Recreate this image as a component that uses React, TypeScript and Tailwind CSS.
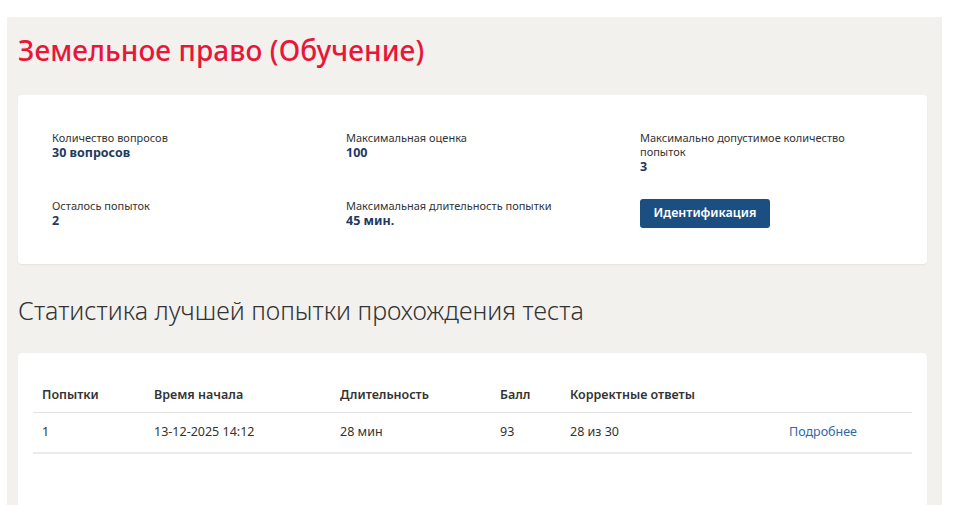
import React from "react";

const Info = ({ label, value }: { label: string; value: string }) => (
  <div className="flex flex-col">
    <div className="text-[11px] leading-[14px] text-[#333]">{label}</div>
    <div className="text-[12.5px] leading-[15px] font-bold text-[#1d3a5f]">{value}</div>
  </div>
);

export default function App() {
  return (
    <div
      className="h-[505px] w-[961px] overflow-hidden bg-white"
      style={{ fontFamily: '"Noto Sans", "Open Sans", sans-serif' }}
    >
      <div className="ml-[7px] mt-[17px] h-[488px] w-[935px] bg-[#f2f1ee] pl-[11px] pr-[15px]">
        <h1 className="pt-[16px] text-[28px] leading-[34px] font-medium text-[#e8173a] tracking-[0.1px]">
          Земельное право (Обучение)
        </h1>
        <div className="mt-[28px] h-[169px] rounded-[4px] bg-white shadow-[0_1px_2px_rgba(0,0,0,0.06)] pl-[34px] pt-[36px]">
          <div className="grid grid-cols-[294px_294px_230px] gap-y-[25px]">
            <Info label="Количество вопросов" value="30 вопросов" />
            <Info label="Максимальная оценка" value="100" />
            <Info label="Максимально допустимое количество попыток" value="3" />
            <Info label="Осталось попыток" value="2" />
            <Info label="Максимальная длительность попытки" value="45 мин." />
            <div>
              <button className="h-[29px] w-[130px] rounded-[3px] bg-[#1b4f82] text-[12.5px] font-semibold text-white">
                Идентификация
              </button>
            </div>
          </div>
        </div>
        <h2 className="mt-[30px] text-[25px] leading-[32px] font-light text-[#333]">
          Статистика лучшей попытки прохождения теста
        </h2>
        <div className="mt-[27px] h-[200px] rounded-[4px] bg-white px-[15px] pt-[27px]">
          <table className="w-full border-collapse text-[12.5px] text-[#333]">
            <thead>
              <tr className="border-b border-[#e3e3e3] text-left">
                <th className="h-[32px] w-[121px] pl-[9px] font-semibold">Попытки</th>
                <th className="w-[186px] font-semibold">Время начала</th>
                <th className="w-[160px] font-semibold">Длительность</th>
                <th className="w-[70px] font-semibold">Балл</th>
                <th className="w-[219px] font-semibold">Корректные ответы</th>
                <th></th>
              </tr>
            </thead>
            <tbody>
              <tr className="border-b-2 border-[#ebebeb]">
                <td className="h-[41px] pl-[9px]">1</td>
                <td>13-12-2025 14:12</td>
                <td>28 мин</td>
                <td>93</td>
                <td>28 из 30</td>
                <td className="text-[#2e6aa6]">Подробнее</td>
              </tr>
            </tbody>
          </table>
        </div>
      </div>
    </div>
  );
}
